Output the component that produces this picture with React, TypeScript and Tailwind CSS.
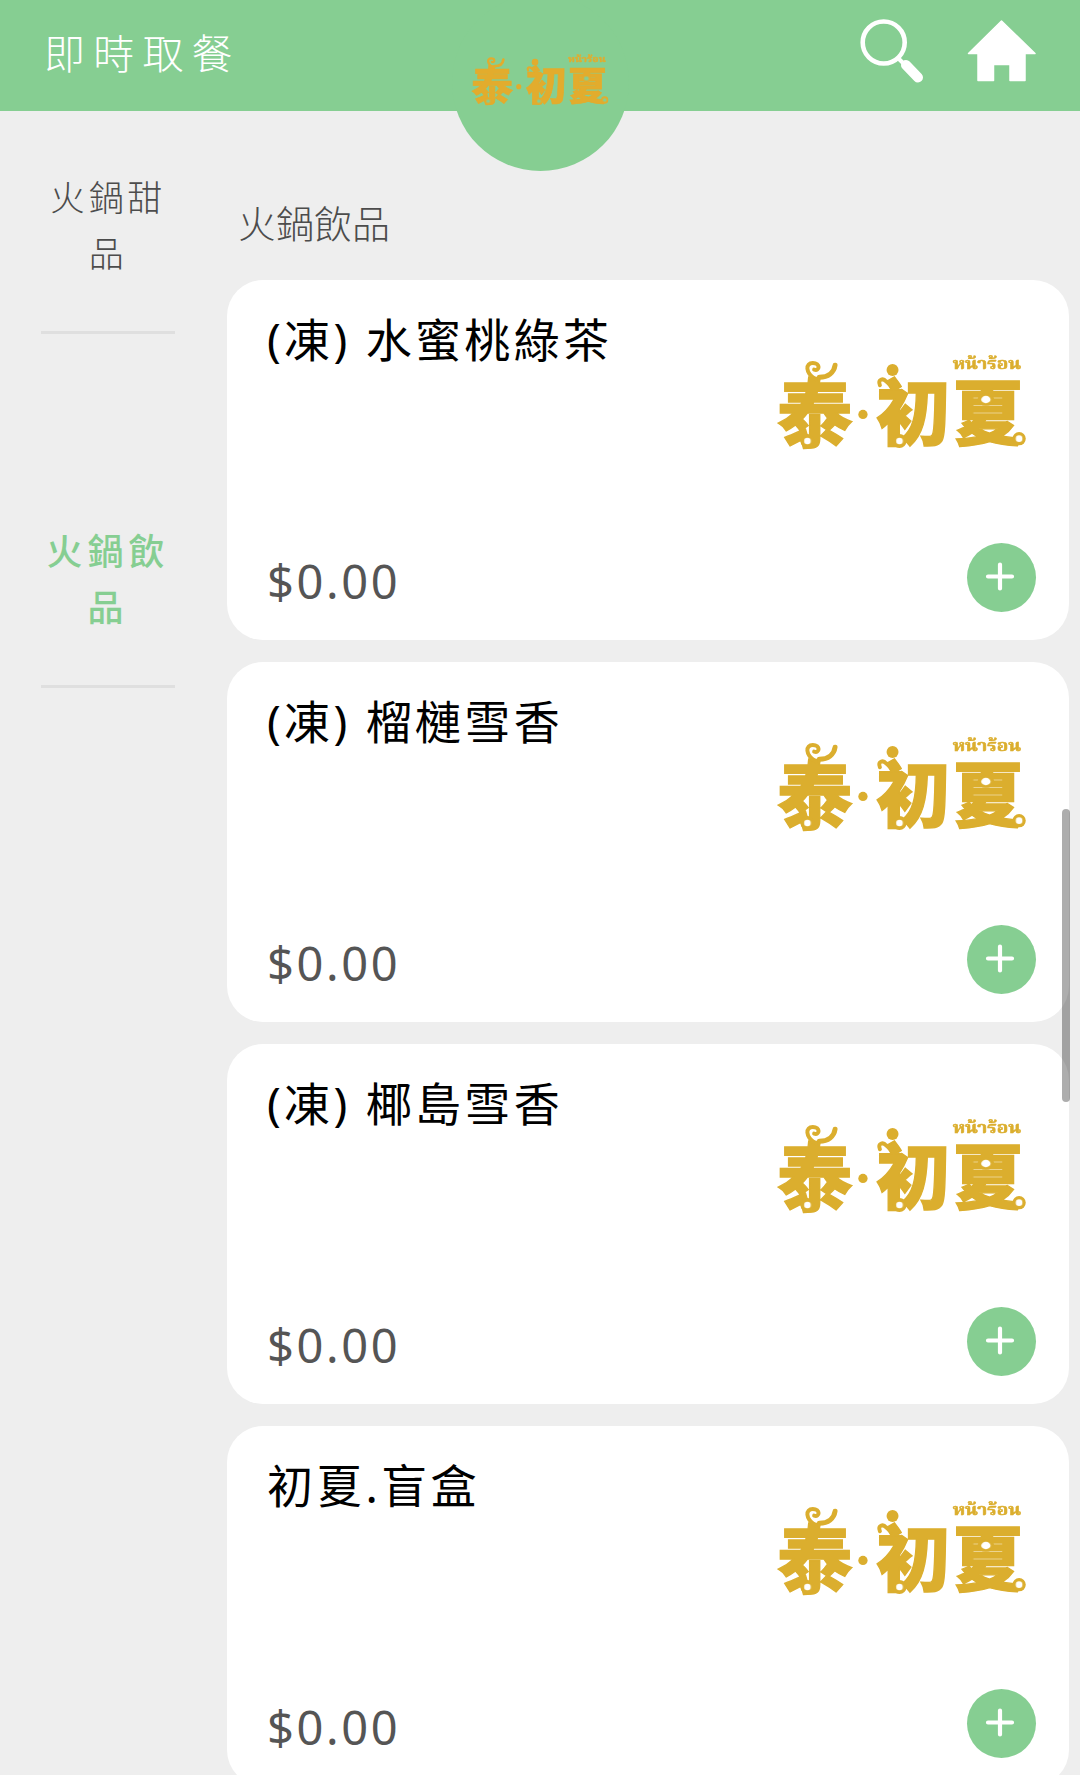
const items = [
    { id: 1, name: "(凍) 水蜜桃綠茶", price: "$0.00" },
    { id: 2, name: "(凍) 榴槤雪香", price: "$0.00" },
    { id: 3, name: "(凍) 椰島雪香", price: "$0.00" },
    { id: 4, name: "初夏.盲盒", price: "$0.00" },
];

function Logo({ className }: { className: string }) {
    return (
        <svg viewBox="80 60 760 310" className={className} fill="currentColor" overflow="visible">
            {/* holes of the rings */}
            <mask id="logo-holes" maskUnits="userSpaceOnUse" x="60" y="40" width="800" height="340">
                <rect x="60" y="40" width="800" height="340" fill="white" />
                <g fill="black">
                    <circle cx="811" cy="327" r="10" />
                    <circle cx="451" cy="334" r="10" />
                    <circle cx="174" cy="334" r="10" />
                    <ellipse cx="711" cy="209" rx="14" ry="11" />
                </g>
            </mask>
            <g mask="url(#logo-holes)">
                <g className="font-['Noto_Sans_CJK_TC',sans-serif] font-black" stroke="currentColor" strokeWidth="4">
                    <text transform="translate(83 334) scale(1 0.98)" fontSize="226">泰</text>
                    <text transform="translate(380 329) scale(1 0.96)" fontSize="224">初</text>
                    <text transform="translate(608 329) scale(1 0.98)" fontSize="218">夏</text>
                </g>
                <circle cx="811" cy="327" r="20" />
                <circle cx="451" cy="334" r="21" />
                <circle cx="174" cy="334" r="21" />
                <ellipse cx="711" cy="209" rx="25" ry="19" />
                <circle cx="341" cy="254" r="14" />
                <circle cx="430" cy="120" r="18" />
                <g fill="none" stroke="currentColor" strokeWidth="12" strokeLinecap="round">
                    <path d="M198 148C166 128 168 99 190 99C214 99 211 125 194 119" />
                    <path d="M210 142C236 142 254 128 257 106" strokeWidth="15" />
                    <path d="M392 166C384 148 402 144 410 154L424 166L434 150" />
                </g>
            </g>
            <text x="611" y="117" fontSize="46" textLength="206" lengthAdjust="spacingAndGlyphs" stroke="currentColor" strokeWidth="1.5" className="font-['Noto_Serif_Thai','Noto_Sans_Thai',sans-serif] font-bold">หน้าร้อน</text>
        </svg>
    );
}

function Category({ name, active }: { name: string, active?: boolean }) {
    return (
        <div className="h-[354px] w-[134px] flex flex-col">
            <h2 className={active
                ? "-mx-3 pt-[1px] text-center text-[36px] leading-[56px] tracking-[5px] font-medium text-[#86ce92]"
                : "-mx-3 pt-[1px] text-center text-[35px] leading-[56px] tracking-[3.6px] font-light text-[#4c4c4c]"}>
                {name.slice(0, 3)}<br />{name.slice(3)}
            </h2>
            <div className="mt-[49px] h-[3px] bg-[#dfdfdf]"></div>
        </div>
    );
}

function Card({ name, price }: { name: string, price: string }) {
    return (
        <div className="h-[360px] shrink-0 rounded-[36px] bg-white flex justify-between pl-[40px] pr-[33px]">
            <div className="flex flex-col justify-between pt-[25px] pb-[25px]">
                <h3 className="text-[46px] leading-[68px] tracking-[3.3px] text-black whitespace-nowrap">{name}</h3>
                <p className="text-[47px] leading-[68px] tracking-[2.6px] text-[#555555]">{price}</p>
            </div>
            <div className="flex flex-col items-end justify-between pt-[70px] pb-[28px]">
                <Logo className="w-[253px] h-[103px] mr-[7px] text-[#dbae2e]" />
                <button className="size-[69px] rounded-full bg-[#86ce92] flex items-center justify-center cursor-pointer">
                    <svg viewBox="0 0 69 69" className="size-full" stroke="white" strokeWidth="4.2" strokeLinecap="round">
                        <path d="M21 33.5H45M33 21.5V45.5" />
                    </svg>
                </button>
            </div>
        </div>
    );
}

function App() {
    return (
        <div className="relative w-[1080px] h-[1775px] overflow-hidden bg-[#eeeeee] font-['Noto_Sans','Noto_Sans_CJK_TC',sans-serif]">
            <header className="relative h-[111px] bg-[#86ce92] flex justify-between">
                <h1 className="pl-[44px] pt-[23px] text-[41px] leading-[60px] tracking-[8.2px] font-light text-white">即時取餐</h1>
                <div className="absolute left-[452px] -top-[6px] size-[177px] rounded-full bg-[#86ce92] flex justify-center">
                    <Logo className="mt-[57px] w-[139px] h-[57px] text-[#e2ac2d]" />
                </div>
                <svg viewBox="0 0 250 120" className="w-[250px] h-[120px]">
                    <circle cx="53.7" cy="42.5" r="21" fill="none" stroke="white" strokeWidth="4.6" />
                    <path d="M67.5 57.5L73 63" stroke="white" strokeWidth="4" />
                    <path d="M76 65L88 77.5" stroke="white" strokeWidth="10" strokeLinecap="round" />
                    <path d="M171.5 21L205 53.5H195V80.5H180V64.5H163.5V80.5H148V53.5H138.5Z" fill="white" stroke="white" strokeWidth="1.5" strokeLinejoin="round" />
                </svg>
            </header>

            <main className="flex">
                <nav className="w-[227px] pl-[41px] pt-[58px]">
                    <Category name="火鍋甜品" />
                    <Category name="火鍋飲品" active />
                </nav>
                <section className="w-[842px]">
                    <h2 className="h-[169px] pl-[11px] pt-[83px] text-[38px] leading-[58px] font-light text-[#4c4c4c]">火鍋飲品</h2>
                    <div className="flex flex-col gap-[22px]">
                        {items.map((item) => (
                            <Card key={item.id} name={item.name} price={item.price} />
                        ))}
                    </div>
                </section>
            </main>

            <div className="absolute left-[1062px] top-[809px] w-[8px] h-[293px] rounded-full bg-black/32"></div>
        </div>
    );
}

export default App;
